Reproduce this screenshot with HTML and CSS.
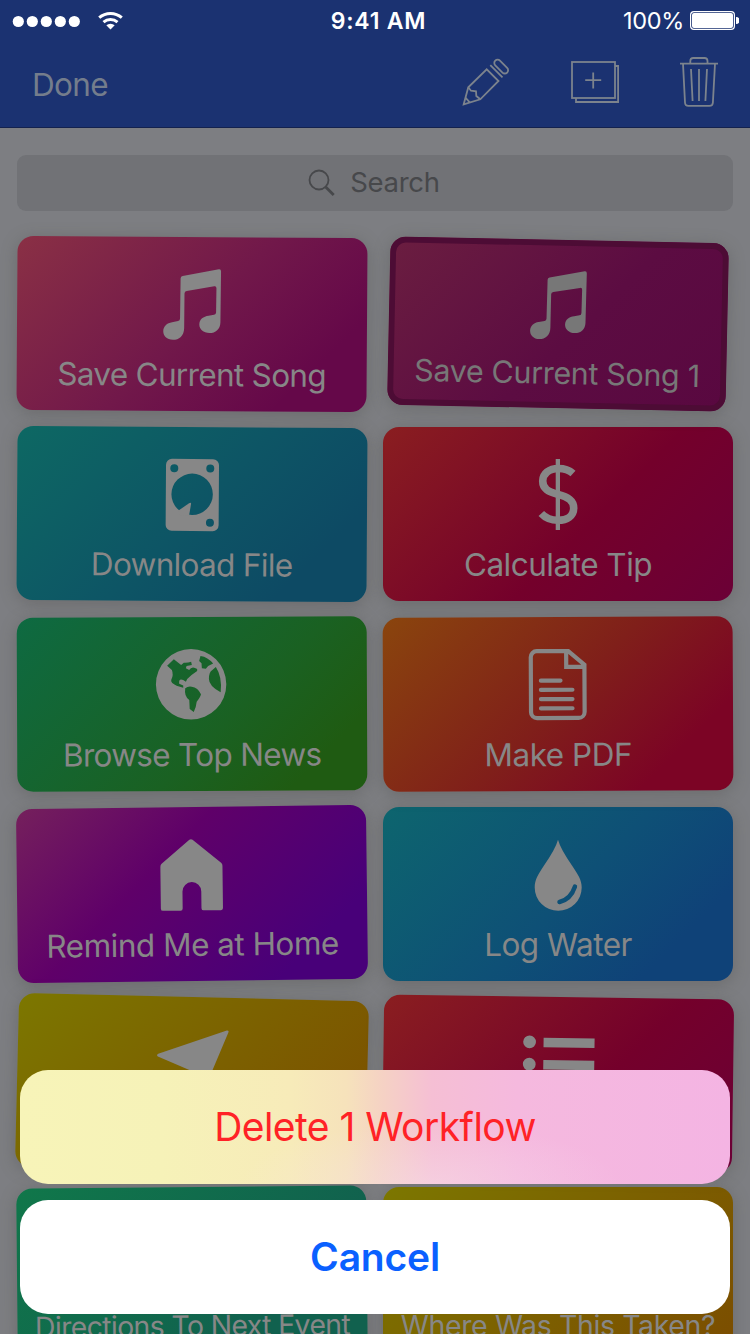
FILE: index.html
```html
<!DOCTYPE html>
<html lang="en">
<head>
<meta charset="utf-8">
<title>Workflows</title>
<link rel="stylesheet" href="styles.css">
</head>
<body>
<div class="screen">
  <header class="header">
    <div class="status">
      <svg class="signal" width="112" height="40" viewBox="0 0 112 40" fill="#fff"><circle cx="6.3" cy="20.5" r="5.6"/><circle cx="20.3" cy="20.5" r="5.6"/><circle cx="34.3" cy="20.5" r="5.6"/><circle cx="48.3" cy="20.5" r="5.6"/><circle cx="62.3" cy="20.5" r="5.6"/>
        <g fill="none" stroke="#fff" stroke-width="3"><path d="M87.2 16.6a17.3 17.3 0 0 1 22.6 0"/><path d="M91.5 21.2a10.6 10.6 0 0 1 14 0"/></g><path d="M98.5 28.6l-4.2-4.3a6.3 6.3 0 0 1 8.4 0z"/></svg>
      <span class="time">9:41 AM</span>
      <div class="power"><span class="percent">100%</span>
        <svg width="49" height="20" viewBox="0 0 49 20"><rect x=".6" y=".6" width="43.8" height="17.8" rx="3.4" fill="none" stroke="#fff" stroke-width="1.2"/><rect x="2" y="2" width="41" height="15" rx="2" fill="#fff"/><path d="M46 6a3.5 3.5 0 0 1 0 7z" fill="#fff"/></svg></div>
    </div>
    <nav class="nav">
      <span class="done">Done</span>
      <svg class="tool pencil" width="52" height="52" viewBox="0 0 52 52"><path d="M3.7 48.3L8.3 31.3 26.7 13.3 38.5 25 20.3 43.3z"/><path d="M8.3 31.3L11 34.7l5 .6.3 4.7 4 3.3M5.6 41.8l4.2 4.5M30.3 9.2L42.5 21.4"/><rect x="-8.4" y="-3.3" width="16.8" height="6.6" rx="3.3" transform="translate(41.2 10.6) rotate(45)"/></svg>
      <svg class="tool add" width="50" height="44" viewBox="0 0 50 44"><rect x="2" y="2" width="43" height="36"/><path d="M45 6h3.1v36H6v-4M23.2 12.6v16M15.2 20.2h16"/></svg>
      <svg class="tool trash" width="40" height="52" viewBox="0 0 40 52"><path d="M1 7.7h38M11.3 7.7V5a3 3 0 0 1 3-3h11.2a3 3 0 0 1 3 3v2.7M4 7.7L6 46.5a3.5 3.5 0 0 0 3.5 3.4h20.9a3.5 3.5 0 0 0 3.5-3.4L36 7.7M12 13l1.6 32M20 13v32M28 13l-1.6 32"/></svg>
    </nav>
  </header>
  <main class="content">
    <div class="search"><svg width="28" height="28" viewBox="0 0 28 28" fill="none" stroke="#47484b"><circle cx="11" cy="11" r="9.5" stroke-width="1.8"/><path d="M17.7 18l8 8" stroke-width="2.8"/></svg><span>Search</span></div>
    <div class="grid">
      <div class="card song"><svg class="icon" viewBox="0 0 72 72"><path id="note" d="M24.3 9.5Q24.3 7.5 26.3 7L62.5 0Q64.7-.3 64.7 2L64.4 53C64.4 60 59.5 64 53.5 64 47.5 64 43.3 60 43.3 55.5 43.3 50 47.5 47.3 52.5 46.6L58 45.6Q60 45.2 60 43L60.2 19Q60.2 16.8 58 17.2L30.5 22Q28.3 22.4 28.3 24.5L28.2 59C28.2 67 23 71 17 71 11 71 7.3 67 7.3 62.5 7.3 57.5 11 54 16 53.3L22 52.1Q24 51.7 24 49.5z"/></svg><span class="label">Save Current Song</span></div>
      <div class="card song selected"><svg class="icon" viewBox="0 0 72 72"><use href="#note"/></svg><span class="label">Save Current Song 1</span></div>
      <div class="card download"><svg class="icon" viewBox="0 0 72 72"><path fill-rule="evenodd" d="M15.7 0h41a6 6 0 0 1 6 6v60a6 6 0 0 1-6 6h-41a6 6 0 0 1-6-6V6a6 6 0 0 1 6-6zM14 9.3a4 4 0 1 0 8 0 4 4 0 1 0-8 0M50 9.3a4 4 0 1 0 8 0 4 4 0 1 0-8 0M50 63.7a4 4 0 1 0 8 0 4 4 0 1 0-8 0M15.3 35.3a20.7 20.7 0 1 0 41.4 0 20.7 20.7 0 1 0-41.4 0"/><path d="M22.5 51.6L33 44.2Q35.3 43 35 45L33 57 24 56z"/></svg><span class="label">Download File</span></div>
      <div class="card tip"><svg class="icon" viewBox="0 0 72 72"><path d="M33.7 0h4.3v71h-4.3z"/><path fill="none" stroke="currentColor" stroke-width="7.6" d="M51 14.5C47 11 42 9.5 36.5 9.5 27 9.5 20.7 14.5 20.7 22 20.7 30 26.5 32.7 36 35.3 46 38 51.7 41.5 51.7 49 51.7 57 45 61.3 36 61.3 29 61.3 23.5 59 19.3 54.5"/></svg><span class="label wide">Calculate Tip</span></div>
      <div class="card news"><svg class="icon" viewBox="0 0 72 72"><path fill-rule="evenodd" d="M0 35.3a35.2 35.2 0 1 0 70.4 0 35.2 35.2 0 1 0-70.4 0M18 10.3L25.3 16 28 13.7Q32 14 35.3 12.7L36 16 30.7 17 30 19.3 33.3 21Q36 16.5 41.3 20L41.3 22 35.7 26 31.3 30 30 32.7 27.3 31Q22.5 29 23.3 34.7L27.3 36.5 27.3 38.7 20.7 36.7Q14.7 34 15.3 31 18 26 16 21L11.3 16.7zM44.7 7Q52 8 57.3 14.7L52.3 17 50 19.7 46 19.3 45.7 14.3 43.3 12zM60 18Q66.5 28 64.7 43.3 53 37 53 30 53 23 56.5 21zM29.3 39.3Q32 37 35.7 37.7 42 38.5 45 45.3 44.5 48 40.7 52.7 40 59 37.7 63L33.7 60 33.3 51Q28 47.5 29.3 39.3z"/></svg><span class="label">Browse Top News</span></div>
      <div class="card pdf"><svg class="icon" viewBox="0 0 72 72"><g fill="none" stroke="currentColor" stroke-width="4.2"><path d="M15 2.1H46.5L62.6 15.8V63a6 6 0 0 1-6 6H15a6 6 0 0 1-6-6V8.1a6 6 0 0 1 6-6zM44.4 2V17.9H62.6"/><path stroke-linecap="round" d="M19 31.6H38.6M19 40.8H50.5M19 50.1H50.5M19 59.3H50.5"/></g></svg><span class="label wide">Make PDF</span></div>
      <div class="card home"><svg class="icon" viewBox="0 0 72 72"><path d="M34 .8Q35.6-.3 37.2.8L65.5 24Q66.8 25.2 66.8 27V69.5Q66.8 71.5 64.8 71.5H47.5Q45.3 71.5 45.3 69.3V52.5A9.4 9.4 0 0 0 26.5 52.5V69.3Q26.5 71.5 24.3 71.5H6.8Q4.7 71.5 4.7 69.3V27.5Q4.7 25.7 6 24.5z"/></svg><span class="label wide">Remind Me at Home</span></div>
      <div class="card water"><svg class="icon" viewBox="0 0 72 72"><path fill-rule="evenodd" d="M36 .8Q38.5 10 50 26.5C56 35.5 59.7 41 59.7 48.5A23.5 23.2 0 0 1 12.7 48.5C12.7 41 16 35.5 22 26.5Q33.5 10 36 .8zM50.9 46.8Q47 58.5 37 60.8A2.2 2.2 0 0 0 38 65.2Q50.5 62 55 48.4A2.2 2.2 0 0 0 50.9 46.8z"/></svg><span class="label wide">Log Water</span></div>
      <div class="card yellow arrow"><svg class="icon" viewBox="0 0 72 72"><path d="M69.5 .6Q71.9.3 71.1 2.7L45 69Q43 71 42 68L36.5 45Q35.8 42.3 33 41L1.2 28.4Q-.7 27 1.5 25.6z"/></svg></div>
      <div class="card tip list"><svg class="icon" viewBox="0 0 72 72"><circle cx="7" cy="13.3" r="6.4"/><circle cx="7" cy="35.6" r="6.4"/><circle cx="7" cy="58" r="6.4"/><path d="M21 9h51v9.5H21zM21 31.2h51v9.5H21zM21 53.5h51v9.5H21z"/></svg></div>
      <div class="card directions"><span class="label">Directions To Next Event</span></div>
      <div class="card yellow where"><span class="label">Where Was This Taken?</span></div>
    </div>
  </main>
  <div class="sheet"><div class="action delete"><span>Delete 1 Workflow</span></div><div class="action cancel"><span>Cancel</span></div></div>
</div>
</body>
</html>
```
FILE: styles.css
```css
* { box-sizing: border-box; }
body { margin: 0; font-family: Inter, "Liberation Sans", sans-serif; font-feature-settings: "liga" 0, "calt" 0; }
.screen { position: relative; width: 750px; height: 1334px; overflow: hidden; background: #7d7e82; }
.header { height: 128px; background: #1b3271; border-bottom: 1px solid #14224e; color: #fff; }
.status { display: grid; grid-template-columns: 1fr auto 1fr; height: 40px; padding: 0 11px 0 12px; align-items: center; line-height: 40px; }
.signal { display: block; }
.time { font-size: 23px; font-weight: 600; letter-spacing: .8px; padding: 1px 0 0 6px; }
.power { display: flex; justify-content: flex-end; align-items: center; gap: 6px; }
.percent { font-size: 23.5px; padding-top: 1px; letter-spacing: -.3px; }
.nav { display: flex; align-items: flex-start; height: 87px; padding: 16px 31px 0 32px; }
.done { width: 428px; font-size: 31.5px; line-height: 38px; margin-top: 10px; letter-spacing: -.7px; color: #747d8c; }
.tool { fill: none; stroke: #7c838d; stroke-width: 1.8; }
.add { margin: 4px 0 0 58px; }
.trash { margin-left: 59px; }
.content { padding: 27px 17px 0; }
.search { display: flex; align-items: center; justify-content: center; gap: 14px; height: 56px; padding-right: 2px; border-radius: 9px; background: #717276; color: #47484b; font-size: 27.5px; line-height: 54px; letter-spacing: -.3px; }
.search span { padding-bottom: 2px; }
.grid { display: grid; grid-template-columns: 350px 350px; grid-auto-rows: 174px; gap: 16px; margin-top: 26px; }
.card { display: flex; flex-direction: column; align-items: center; padding-top: 32px; border-radius: 16px; color: #878787; box-shadow: 0 3px 16px rgba(80, 80, 76, .4); }
.icon { width: 72px; height: 72px; flex: none; fill: currentColor; overflow: visible; }
.label { margin-top: 14px; font-size: 31.5px; line-height: 40px; letter-spacing: -.68px; white-space: nowrap; }
.label.wide { letter-spacing: -.5px; }
.song { background: linear-gradient(135deg, #8a3045, #71184a 50%, #650849 82%); transform: rotate(.38deg); }
.selected { background: linear-gradient(135deg, #6b1e40, #5c0c42 55%, #590840); box-shadow: inset 0 0 0 6px #4d0c35, 0 3px 16px rgba(80, 80, 76, .4); color: #777; transform: rotate(1.2deg) scale(.967); }
.selected .label { letter-spacing: -.35px; }
.download { background: linear-gradient(135deg, #0d6863, #0d5565 50%, #0d4a64 82%); transform: rotate(.36deg); }
.tip { background: linear-gradient(135deg, #8a1e20, #74002b 58%, #6b0036); }
.news { background: linear-gradient(135deg, #0e6a42, #1a6122 60%, #1f5b12 85%); transform: rotate(-.23deg); }
.pdf { background: linear-gradient(135deg, #8a450d, #801f1a 50%, #7c0425 82%); transform: rotate(-.28deg); }
.home { background: linear-gradient(135deg, #75205c, #5f0069 38%, #480079 83%); transform: rotate(-.7deg); }
.water { background: linear-gradient(135deg, #0d656e, #0e5076 52%, #0f4278 82%); }
.yellow { background: linear-gradient(135deg, #7c7700, #7c6000 52%, #7b4c00); }
.arrow { transform: rotate(1.4deg); }
.list { transform: rotate(.78deg); }
.directions { background: linear-gradient(135deg, #10774a, #11614e 72%); transform: rotate(-.55deg); }
.directions, .where { padding-top: 105px; }
.directions .label, .where .label { font-size: 28.5px; }
.where .label { letter-spacing: -.4px; }
.sheet { position: absolute; left: 20px; top: 1070px; width: 710px; display: grid; gap: 16px; }
.action { display: flex; height: 114px; align-items: center; justify-content: center; border-radius: 28px; font-size: 39px; line-height: 48px; }
.delete { color: #ff2226; letter-spacing: -.55px; background: radial-gradient(ellipse 190px 60px at 410px 114px, rgba(246, 228, 240, .4), transparent), linear-gradient(90deg, #f7f4b8, #f6f2b8 20%, #f7ebb9 38%, #f6e2bb 46%, #f5d2c4 51%, #f5bfd4 58%, #f5b9de 70%, #f4b4e3); }
.cancel { color: #0a60ff; background: #fff; font-weight: 600; letter-spacing: -.2px; }
```
